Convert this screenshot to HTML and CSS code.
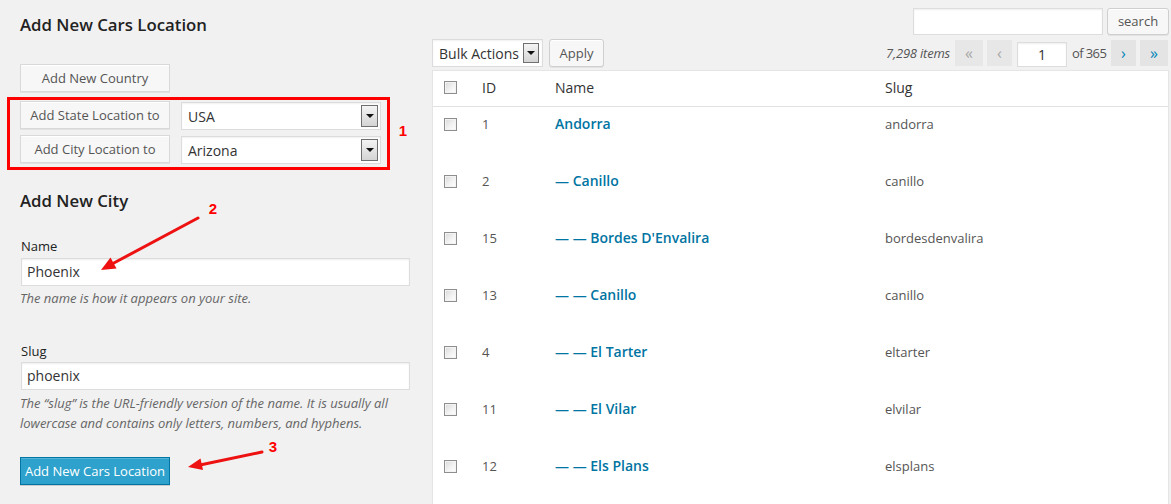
FILE: index.html
```html
<!DOCTYPE html>
<html lang="en">
<head>
<meta charset="utf-8">
<title>Add New Cars Location</title>
<link rel="stylesheet" href="styles.css">
</head>
<body>
<div class="page">
  <div class="col-left">
    <h3 class="title">Add New Cars Location</h3>
    <div class="loc-actions">
      <button class="btn btn-loc btn-country">Add New Country</button>
      <div class="loc-row loc-row-first">
        <button class="btn btn-loc">Add State Location to</button>
        <div class="select select-loc"><span class="select-text">USA</span><span class="select-arrow"><span class="tri"></span></span></div>
      </div>
      <div class="loc-row">
        <button class="btn btn-loc">Add City Location to</button>
        <div class="select select-loc"><span class="select-text">Arizona</span><span class="select-arrow"><span class="tri"></span></span></div>
      </div>
    </div>

    <h3 class="title title-city">Add New City</h3>
    <div class="field">
      <label class="label">Name</label>
      <div class="input">Phoenix</div>
      <p class="desc">The name is how it appears on your site.</p>
    </div>
    <div class="field field-slug">
      <label class="label">Slug</label>
      <div class="input">phoenix</div>
      <p class="desc">The “slug” is the URL-friendly version of the name. It is usually all lowercase and contains only letters, numbers, and hyphens.</p>
    </div>
    <button class="btn-primary">Add New Cars Location</button>
  </div>

  <div class="col-right">
    <div class="search-row">
      <div class="search-input"></div>
      <button class="btn btn-round btn-search">search</button>
    </div>
    <div class="tablenav">
      <div class="bulk">
        <div class="select select-bulk"><span class="select-text">Bulk Actions</span><span class="select-arrow arrow-bulk"><span class="tri"></span></span></div>
        <button class="btn btn-round btn-apply">Apply</button>
      </div>
      <div class="pagination">
        <span class="items">7,298 items</span>
        <span class="pg pg-first disabled">«</span>
        <span class="pg pg-prev disabled">‹</span>
        <span class="pg-input">1</span>
        <span class="pg-of">of 365</span>
        <span class="pg pg-next">›</span>
        <span class="pg pg-last">»</span>
      </div>
    </div>
    <div class="table">
      <div class="trow thead">
        <div class="cell cb"><span class="checkbox"></span></div>
        <div class="cell">ID</div>
        <div class="cell">Name</div>
        <div class="cell">Slug</div>
      </div>
      <div class="trow">
        <div class="cell cb"><span class="checkbox"></span></div>
        <div class="cell id">1</div>
        <div class="cell name">Andorra</div>
        <div class="cell slug">andorra</div>
      </div>
      <div class="trow">
        <div class="cell cb"><span class="checkbox"></span></div>
        <div class="cell id">2</div>
        <div class="cell name">— Canillo</div>
        <div class="cell slug">canillo</div>
      </div>
      <div class="trow">
        <div class="cell cb"><span class="checkbox"></span></div>
        <div class="cell id">15</div>
        <div class="cell name">— — Bordes D'Envalira</div>
        <div class="cell slug">bordesdenvalira</div>
      </div>
      <div class="trow">
        <div class="cell cb"><span class="checkbox"></span></div>
        <div class="cell id">13</div>
        <div class="cell name">— — Canillo</div>
        <div class="cell slug">canillo</div>
      </div>
      <div class="trow">
        <div class="cell cb"><span class="checkbox"></span></div>
        <div class="cell id">4</div>
        <div class="cell name">— — El Tarter</div>
        <div class="cell slug">eltarter</div>
      </div>
      <div class="trow">
        <div class="cell cb"><span class="checkbox"></span></div>
        <div class="cell id">11</div>
        <div class="cell name">— — El Vilar</div>
        <div class="cell slug">elvilar</div>
      </div>
      <div class="trow">
        <div class="cell cb"><span class="checkbox"></span></div>
        <div class="cell id">12</div>
        <div class="cell name">— — Els Plans</div>
        <div class="cell slug">elsplans</div>
      </div>
    </div>
  </div>

  <svg class="annotations" width="1171" height="504" viewBox="0 0 1171 504">
    <rect x="8.5" y="98.5" width="380" height="70" fill="none" stroke="#ff0000" stroke-width="3"/>
    <text x="403" y="136" class="num" text-anchor="middle">1</text>
    <text x="213" y="214" class="num" text-anchor="middle">2</text>
    <text x="273" y="452" class="num" text-anchor="middle">3</text>
    <line x1="198" y1="218" x2="112" y2="264" stroke="#ee1111" stroke-width="3" stroke-linecap="round"/>
    <polygon points="101,270 116.5,268.5 110.5,257.5" fill="#ee1111"/>
    <line x1="262" y1="452" x2="200" y2="465" stroke="#ee1111" stroke-width="3" stroke-linecap="round"/>
    <polygon points="188,467 203,470 200.5,458.5" fill="#ee1111"/>
  </svg>
</div>
</body>
</html>
```

FILE: styles.css
```css
* { box-sizing: border-box; }

html, body {
  margin: 0;
  padding: 0;
  height: 504px;
  overflow: hidden;
  background: #f1f1f1;
  font-family: "Open Sans", "Liberation Sans", sans-serif;
  font-size: 13px;
  color: #444;
}

.page {
  position: relative;
  display: flex;
  align-items: flex-start;
  height: 504px;
}

/* ---------- left column ---------- */
.col-left {
  width: 410px;
  padding-left: 20px;
  flex: none;
}

.title {
  margin: 13px 0 0;
  font-size: 16.8px;
  line-height: 24px;
  font-weight: 600;
  color: #222;
}

.title-city {
  margin-top: 25px;
}

.loc-actions {
  margin-top: 27px;
  display: flex;
  flex-direction: column;
}

.loc-row {
  display: flex;
  align-items: flex-start;
  gap: 11px;
  margin-top: 5px;
}

.loc-row-first {
  margin-top: 9px;
}

.btn {
  font-family: "Open Sans", "Liberation Sans", sans-serif;
  font-size: 13px;
  color: #555;
  background: #f7f7f7;
  border: 1px solid #d9d9d9;
  margin: 0;
  padding: 0;
  cursor: pointer;
  box-shadow: inset 0 1px 0 #fff, 0 1px 0 rgba(0,0,0,.06);
}

.btn-loc {
  width: 150px;
  height: 28px;
  line-height: 26px;
  border-radius: 0;
}

.btn-round {
  border-radius: 3px;
  border-color: #cfcfcf;
}

.select {
  display: flex;
  align-items: center;
  justify-content: space-between;
  background: #fff;
  border: 1px solid #dcdcdc;
  box-shadow: inset 0 1px 2px rgba(0,0,0,.06);
  font-size: 14px;
  color: #333;
}

.select-loc {
  width: 200px;
  height: 28px;
  margin-top: 1px;
  padding: 0 2px 0 6px;
}

.select-arrow {
  display: flex;
  align-items: center;
  justify-content: center;
  width: 17px;
  height: 22px;
  border: 1px solid #6f6f6f;
  background: linear-gradient(#f4f4f4, #d4d4d4);
}

.tri {
  width: 0;
  height: 0;
  border-left: 4px solid transparent;
  border-right: 4px solid transparent;
  border-top: 4px solid #111;
}

.field {
  margin-left: 1px;
}

.label {
  display: block;
  margin-top: 24px;
  font-size: 13px;
  line-height: 18px;
  color: #222;
}

.field-slug .label {
  margin-top: 35px;
}

.input {
  margin-top: 3px;
  width: 389px;
  height: 28px;
  padding: 0 5px;
  line-height: 26px;
  font-size: 14px;
  color: #333;
  background: #fff;
  border: 1px solid #ddd;
  box-shadow: inset 0 1px 2px rgba(0,0,0,.07);
}

.field-slug .input {
  margin-top: 2px;
}

.desc {
  margin: 3px 0 0 -1px;
  font-size: 13px;
  line-height: 18px;
  font-style: italic;
  color: #666;
}

.field-slug .desc {
  line-height: 20px;
  margin-top: 3px;
}

.btn-primary {
  display: block;
  margin-top: 24px;
  width: 150px;
  height: 28px;
  padding: 0;
  font-family: "Open Sans", "Liberation Sans", sans-serif;
  font-size: 13px;
  color: #fff;
  background: #2ea2cc;
  border: 1px solid #0074a2;
  border-radius: 0;
  box-shadow: inset 0 1px 0 rgba(120,200,230,.5), 0 1px 0 rgba(0,0,0,.15);
}

/* ---------- right column ---------- */
.col-right {
  margin-left: 22px;
  width: 737px;
  flex: none;
}

.search-row {
  display: flex;
  justify-content: flex-end;
  gap: 4px;
  padding-top: 8px;
}

.search-input {
  width: 190px;
  height: 27px;
  background: #fff;
  border: 1px solid #ddd;
  box-shadow: inset 0 1px 2px rgba(0,0,0,.07);
}

.btn-search {
  width: 62px;
  height: 27px;
  line-height: 25px;
}

.tablenav {
  margin-top: 4px;
  height: 28px;
  display: flex;
  justify-content: space-between;
  align-items: center;
}

.bulk {
  display: flex;
  align-items: center;
  gap: 6px;
}

.select-bulk {
  width: 111px;
  height: 28px;
  padding: 0 3px 0 6px;
}

.arrow-bulk {
  width: 16px;
  height: 20px;
}

.btn-apply {
  width: 55px;
  height: 28px;
  line-height: 26px;
}

.pagination {
  display: flex;
  align-items: center;
  height: 28px;
  padding-right: 1px;
}

.items {
  font-style: italic;
  color: #555;
  margin-right: 5px;
  letter-spacing: -0.2px;
}

.pg {
  display: flex;
  align-items: center;
  justify-content: center;
  height: 26px;
  background: #e4e4e4;
  color: #0085ba;
  font-size: 16px;
  line-height: 1;
}

.pg.disabled {
  color: #a8a8a8;
  background: #e7e7e7;
}

.pg-first { width: 28px; }
.pg-prev { width: 25px; margin-left: 4px; }
.pg-next { width: 25px; margin-left: 6px; }
.pg-last { width: 28px; margin-left: 4px; }

.pg-input {
  align-self: flex-end;
  margin-left: 5px;
  width: 50px;
  height: 25px;
  line-height: 23px;
  text-align: center;
  font-size: 14px;
  color: #333;
  background: #fff;
  border: 1px solid #ddd;
  box-shadow: inset 0 1px 2px rgba(0,0,0,.07);
}

.pg-of {
  margin-left: 5px;
  width: 33px;
  white-space: nowrap;
  color: #555;
  font-size: 13px;
  letter-spacing: -0.6px;
}

/* ---------- table ---------- */
.table {
  margin-top: 3px;
  background: #fff;
  border: 1px solid #e5e5e5;
  border-bottom: none;
  box-shadow: 0 1px 1px rgba(0,0,0,.04);
  height: 460px;
}

.trow {
  display: grid;
  grid-template-columns: 39px 73px 330px 1fr;
  height: 57px;
  align-items: start;
}

.thead {
  height: 36px;
  border-bottom: 1px solid #e1e1e1;
  font-size: 14px;
  color: #333;
}

.cell {
  padding: 7px 10px 0;
  line-height: 20px;
}

.cell.cb {
  padding: 11px 0 0 11px;
  line-height: 0;
}

.thead .cell.cb {
  padding-top: 10px;
}

.checkbox {
  display: inline-block;
  width: 13px;
  height: 13px;
  border: 1px solid #8e8e8e;
  background: linear-gradient(135deg, #d8d8d8 0%, #f2f2f2 55%, #ffffff 100%);
  box-shadow: inset 0 0 0 1px #f3f3f3;
}

.id, .slug {
  font-size: 13px;
  color: #555;
}

.name {
  font-size: 14px;
  font-weight: 600;
  color: #0074a2;
}

/* ---------- annotations ---------- */
.annotations {
  position: absolute;
  left: 0;
  top: 0;
  pointer-events: none;
}

.num {
  font-family: "Liberation Sans", Arial, sans-serif;
  font-weight: bold;
  font-size: 15px;
  fill: #ff0000;
}
```
